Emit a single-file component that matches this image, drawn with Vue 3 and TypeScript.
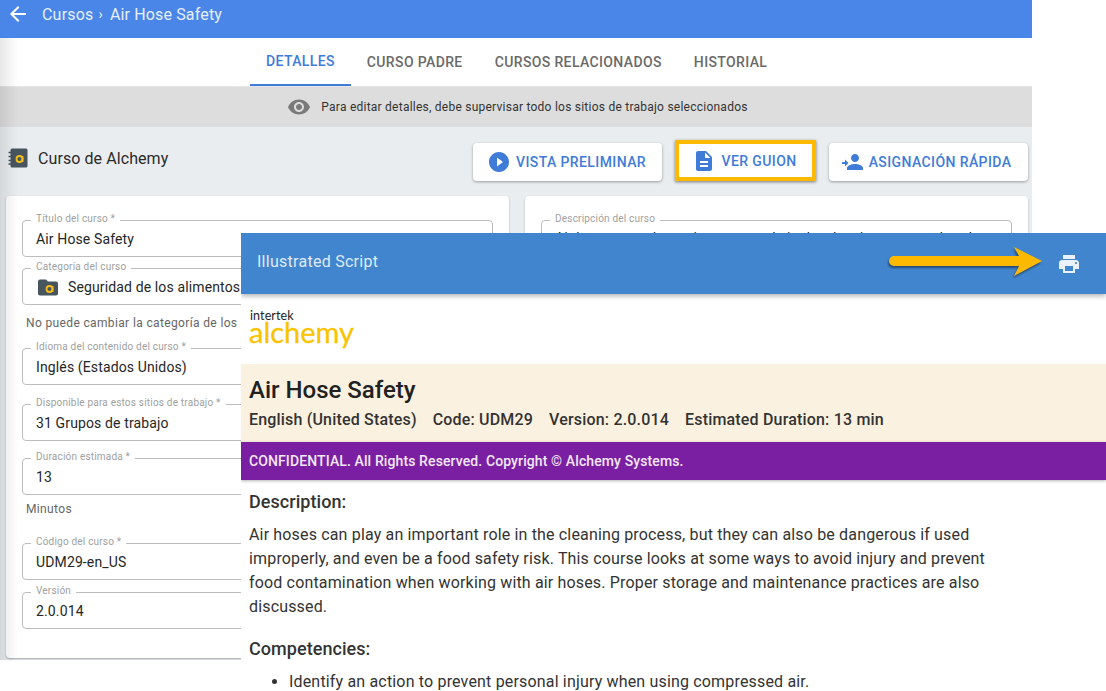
<script setup lang="ts">
const tabs = ['DETALLES', 'CURSO PADRE', 'CURSOS RELACIONADOS', 'HISTORIAL']
interface Field { label: string; value: string; after?: string; folder?: boolean; gap: string }
const fields: Field[] = [
  { label: 'Título del curso *', value: 'Air Hose Safety', gap: 'g11' },
  { label: 'Categoría del curso', value: 'Seguridad de los alimentos', folder: true, after: 'No puede cambiar la categoría de los cursos', gap: 'h1st' },
  { label: 'Idioma del contenido del curso *', value: 'Inglés (Estados Unidos)', gap: 'g19' },
  { label: 'Disponible para estos sitios de trabajo *', value: '31 Grupos de trabajo', gap: 'g17' },
  { label: 'Duración estimada *', value: '13', after: 'Minutos', gap: 'hmin' },
  { label: 'Código del curso *', value: 'UDM29-en_US', gap: 'g12' },
  { label: 'Versión', value: '2.0.014', gap: 'g0' }
]
</script>

<template>
  <div class="page">
    <div class="app">
      <header class="topbar">
        <svg class="back" viewBox="0 0 24 24"><path d="M20 11H7.83l5.59-5.59L12 4l-8 8 8 8 1.41-1.41L7.83 13H20v-2z" /></svg>
        <span class="crumb">Cursos</span><span class="sep">›</span><span class="crumb2">Air Hose Safety</span>
      </header>
      <nav class="tabs">
        <span v-for="(t, i) in tabs" :key="t" class="tab" :class="{ active: i === 0 }">{{ t }}</span>
      </nav>
      <div class="banner">
        <svg class="eye" viewBox="0 0 24 24"><path d="M12 4.5C7 4.5 2.73 7.61 1 12c1.73 4.39 6 7.5 11 7.5s9.27-3.11 11-7.5c-1.73-4.39-6-7.5-11-7.5zM12 17c-2.76 0-5-2.24-5-5s2.24-5 5-5 5 2.24 5 5-2.24 5-5 5zm0-8c-1.66 0-3 1.34-3 3s1.34 3 3 3 3-1.34 3-3-1.34-3-3-3z" /></svg>
        <span>Para editar detalles, debe supervisar todo los sitios de trabajo seleccionados</span>
      </div>
      <main class="content">
        <div class="actions">
          <div class="course-title">
            <svg class="book" viewBox="0 0 20 20">
              <rect x="2.5" y="0.5" width="17" height="19" rx="1.5" fill="#47555f" />
              <path d="M0.5 4.5h4M0.5 8.5h4M0.5 12.5h4M0.5 16h4" stroke="#47555f" stroke-width="1.3" />
              <circle cx="11.5" cy="11" r="3" fill="none" stroke="#f6bd16" stroke-width="1.8" />
              <path d="M14.5 8v6" stroke="#f6bd16" stroke-width="1.8" />
            </svg>
            <span>Curso de Alchemy</span>
          </div>
          <div class="btn b1">
            <svg viewBox="0 0 24 24"><path d="M12 2C6.48 2 2 6.48 2 12s4.48 10 10 10 10-4.48 10-10S17.52 2 12 2zm-2 14.5v-9l6 4.5-6 4.5z" /></svg>
            VISTA PRELIMINAR
          </div>
          <div class="btn b2">
            <svg viewBox="0 0 24 24"><path d="M14 2H6c-1.1 0-1.99.9-1.99 2L4 20c0 1.1.89 2 1.99 2H18c1.1 0 2-.9 2-2V8l-6-6zm2 16H8v-2h8v2zm0-4H8v-2h8v2zm-3-5V3.5L18.5 9H13z" /></svg>
            VER GUION
          </div>
          <div class="btn b3">
            <svg viewBox="0 0 24 24"><path d="M15 12c2.21 0 4-1.79 4-4s-1.79-4-4-4-4 1.79-4 4 1.79 4 4 4zm-13 0h3V9.5L8.500 13 5 16.500V14H2v-2zm13 2c-2.670 0-8 1.340-8 4v2h16v-2c0-2.660-5.330-4-8-4z" /></svg>
            ASIGNACIÓN RÁPIDA
          </div>
        </div>
        <div class="cards">
          <section class="card left">
            <template v-for="f in fields" :key="f.label">
              <div class="field" :class="f.after ? '' : f.gap">
                <label>{{ f.label }}</label>
                <div class="val">
                  <svg v-if="f.folder" class="folder" viewBox="0 0 20 17">
                    <path d="M2 0.500h6l2 2h8a2 2 0 0 1 2 2v10a2 2 0 0 1-2 2H2a2 2 0 0 1-2-2v-12a2 2 0 0 1 2-2z" fill="#47555f" />
                    <circle cx="11.500" cy="10" r="3" fill="none" stroke="#f6bd16" stroke-width="1.800" />
                    <path d="M14.500 7v6" stroke="#f6bd16" stroke-width="1.800" />
                  </svg>
                  {{ f.value }}
                </div>
              </div>
              <div v-if="f.after" class="help" :class="f.gap">{{ f.after }}</div>
            </template>
          </section>
          <section class="card right">
            <div class="field">
              <label>Descripción del curso</label>
              <div class="val desc">Air hoses can play an important role in the cleaning process, but they can also be dangerous if used</div>
            </div>
          </section>
        </div>
      </main>
    </div>

    <div class="script-window">
      <div class="sw-head">
        <span>Illustrated Script</span>
        <svg class="print" viewBox="0 0 24 24"><path d="M19 8H5c-1.660 0-3 1.340-3 3v6h4v4h12v-4h4v-6c0-1.660-1.340-3-3-3zm-3 11H8v-5h8v5zm3-7c-.55 0-1-.45-1-1s.45-1 1-1 1 .45 1 1-.45 1-1 1zm-1-9H6v4h12V3z" /></svg>
      </div>
      <div class="logo">
        <div class="l1">intertek</div>
        <div class="l2">alchemy</div>
      </div>
      <div class="hero">
        <h1>Air Hose Safety</h1>
        <div class="meta">
          <span>English (United States)</span><span>Code: UDM29</span><span>Version: 2.0.014</span><span>Estimated Duration: 13 min</span>
        </div>
      </div>
      <div class="conf">CONFIDENTIAL. All Rights Reserved. Copyright © Alchemy Systems.</div>
      <div class="body">
        <h2>Description:</h2>
        <p>Air hoses can play an important role in the cleaning process, but they can also be dangerous if used improperly, and even be a food safety risk. This course looks at some ways to avoid injury and prevent food contamination when working with air hoses. Proper storage and maintenance practices are also discussed.</p>
        <h2 class="h2b">Competencies:</h2>
        <ul><li>Identify an action to prevent personal injury when using compressed air.</li></ul>
      </div>
    </div>

    <svg class="arrow" viewBox="0 0 160 40">
      <path d="M6 13H131L126 4L154 18L126 33L131 23H6a5 5 0 0 1 0-10z" fill="#fdb900" />
    </svg>
  </div>
</template>

<style>
html, body { margin: 0; background: #fff; }
</style>

<style scoped>
.page { position: relative; width: 1106px; height: 691px; overflow: hidden; background: #fff; font-family: Roboto, "Liberation Sans", sans-serif; color: #212121; }
.app { position: relative; width: 1032px; height: 660px; display: flex; flex-direction: column; background: #eaedf0; }
.app::before { content: ""; position: absolute; left: 0; top: 38px; bottom: 0; width: 18px; background: linear-gradient(90deg, rgba(0,0,0,.09), rgba(0,0,0,0)); pointer-events: none; z-index: 2; }
.topbar { height: 38px; background: #4a86e8; color: #e6effc; display: flex; align-items: center; padding-bottom: 10px; padding-left: 6px; box-sizing: border-box; font-size: 16px; letter-spacing: .2px; flex: none; }
.back { width: 24px; height: 24px; fill: #fff; margin-right: 12px; }
.sep { margin: 0 7px 0 5px; font-size: 14px; }
.crumb2 { letter-spacing: .15px; }
.tabs { height: 49px; background: #fff; display: flex; padding-left: 250px; flex: none; box-sizing: border-box; border-bottom: 1px solid #e6e6e6; }
.tab { padding: 0 16px; display: flex; align-items: center; font-size: 14px; font-weight: 500; letter-spacing: .37px; color: #6a6a6a; height: 48px; box-sizing: border-box; }
.tab.active { color: #3f7cd8; border-bottom: 2px solid #3f7cd8; }
.banner { height: 40px; background: #dddddd; display: flex; align-items: center; justify-content: center; gap: 10px; font-size: 12px; letter-spacing: .24px; color: #333; flex: none; padding-left: 3px; box-sizing: border-box; }
.eye { width: 24px; height: 24px; fill: #7a7a7a; }
.content { flex: 1; display: flex; flex-direction: column; padding: 0 4px 2px 6px; min-height: 0; }
.actions { display: flex; align-items: center; height: 69px; flex: none; box-sizing: border-box; }
.course-title { display: flex; align-items: center; gap: 10px; font-size: 16px; letter-spacing: .08px; margin-right: auto; margin-top: -7px; color: #2a2a2a; margin-left: 2px; }
.book { width: 20px; height: 20px; }
.btn { height: 38px; box-sizing: border-box; display: flex; align-items: center; justify-content: center; background: #fff; border-radius: 4px; box-shadow: 0 1px 3px rgba(0,0,0,.35); color: #3f7cd8; font-size: 14px; font-weight: 500; letter-spacing: .4px; gap: 5px; }
.btn svg { width: 24px; height: 24px; fill: #3f7cd8; }
.b1 { width: 189px; margin-right: 13px; padding-right: 2px; }
.b2 { width: 141px; height: 41px; border: 4px solid #fdb900; border-radius: 0; margin: 0 13px 2px 0; padding-right: 2px; box-shadow: 0 1px 3px rgba(0,0,0,.5); }
.b3 { width: 199px; padding-right: 6px; }
.cards { display: grid; grid-template-columns: 503px 503px; gap: 16px; flex: 1; min-height: 0; }
.card { background: #fff; border-radius: 4px; box-shadow: 0 1px 2px rgba(0,0,0,.3); padding: 24px 16px 0; display: flex; flex-direction: column; }
.field { position: relative; border: 1px solid #bdbdbd; border-radius: 4px; height: 37px; box-sizing: border-box; flex: none; }
.field label { position: absolute; left: 8px; top: -8px; background: #fff; padding: 0 5px; font-size: 10px; line-height: 12px; letter-spacing: .2px; color: #a0a0a0; white-space: nowrap; }
.val { display: flex; align-items: center; box-sizing: border-box; height: 35px; padding: 1px 0 0 13px; font-size: 14px; letter-spacing: .13px; color: #262626; white-space: nowrap; overflow: hidden; }
.val.desc { height: 33px; padding-top: 0; }
.folder { width: 20px; height: 17px; margin: 0 10px 0 2px; }
.help { font-size: 12px; letter-spacing: .36px; color: #666; line-height: 14px; white-space: nowrap; padding-left: 4px; }
.h1st { padding-top: 11px; margin-bottom: 18px; }
.hmin { padding-top: 7px; margin-bottom: 27px; }
.g11 { margin-bottom: 11px; }
.g19 { margin-bottom: 19px; }
.g17 { margin-bottom: 17px; }
.g12 { margin-bottom: 12px; }
.script-window { position: absolute; left: 241px; top: 233px; width: 865px; height: 458px; background: #fff; overflow: hidden; }
.sw-head { height: 61px; background: #4285cf; color: #dfeaf7; display: flex; align-items: center; justify-content: space-between; padding: 0 25px 4px 16px; box-sizing: border-box; font-size: 16px; letter-spacing: .27px; box-shadow: 0 2px 5px rgba(0,0,0,.3); position: relative; }
.print { width: 24px; height: 24px; fill: #eaf1f9; margin-top: 4px; }
.logo { height: 70px; padding: 15px 8px 0; box-sizing: border-box; }
.l1 { font-family: Lato, sans-serif; font-size: 12.500px; line-height: 13px; color: #222; letter-spacing: .1px; padding-left: 1px; }
.l2 { font-family: Lato, sans-serif; font-size: 29px; line-height: 28px; color: #f8c400; -webkit-text-stroke: .3px #f8c400; margin-top: -4px; }
.hero { height: 78px; background: #fbf1e0; padding: 12px 8px 0; box-sizing: border-box; }
h1 { margin: 0; font-size: 24px; line-height: 28px; font-weight: 500; color: #212121; }
.meta { display: flex; gap: 16px; font-size: 16px; line-height: 20px; font-weight: 500; letter-spacing: .18px; margin-top: 6px; color: #333; }
.conf { height: 38px; background: #7b1fa2; color: #f3e8f7; display: flex; align-items: center; padding-left: 8px; font-size: 14px; font-weight: 500; letter-spacing: .11px; box-shadow: 0 1px 3px rgba(0,0,0,.3); position: relative; }
.body { padding: 10px 8px 0; }
h2 { margin: 0; font-size: 18px; line-height: 24px; font-weight: 500; color: #333; letter-spacing: .05px; }
.h2b { margin-top: 18px; }
p { margin: 9px 0 0; max-width: 745px; font-size: 16px; line-height: 24px; letter-spacing: .16px; color: #333; }
ul { margin: 9px 0 0; padding-left: 40px; font-size: 16px; line-height: 24px; letter-spacing: .17px; color: #333; }
.arrow { position: absolute; left: 888px; top: 243px; width: 160px; height: 40px; filter: drop-shadow(-1px 2px 1px rgba(0,0,0,.45)); }
</style>
